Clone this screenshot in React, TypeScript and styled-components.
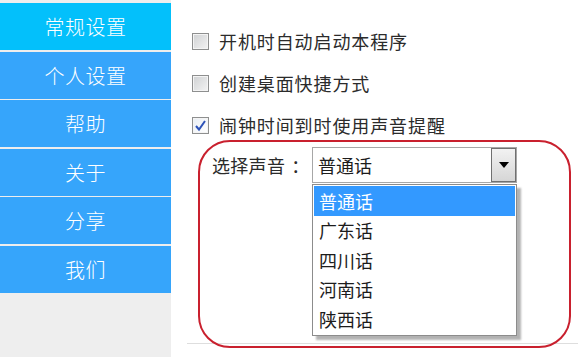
import React from 'react';
import styled, {createGlobalStyle} from 'styled-components';

const GlobalStyle = createGlobalStyle`
	html, body {
		margin: 0;
		padding: 0;
		background: #ffffff;
	}

	body {
		font-family: "Microsoft YaHei", "Noto Sans CJK SC", "Noto Sans", sans-serif;
	}
`;

const Window = styled.div`
	position: relative;
	display: flex;
	width: 578px;
	height: 357px;
	overflow: hidden;
	background: #ffffff;
`;

const Sidebar = styled.nav`
	display: flex;
	flex-direction: column;
	gap: 1.5px;
	width: 171px;
	padding-top: 3px;
	box-sizing: border-box;
	background: #eeeeee;
`;

const NavItem = styled.div<{ $active?: boolean }>`
	display: flex;
	align-items: center;
	justify-content: center;
	height: 47px;
	background: ${p => (p.$active ? '#03c0fb' : '#36a5fb')};
	color: #ffffff;
	font-size: 20px;
	font-weight: 300;
	letter-spacing: 0.5px;
`;

const Main = styled.main`
	position: relative;
	flex: 1;
	padding: 20px 0 0 21px;
`;

const CheckRow = styled.label`
	display: flex;
	align-items: center;
	gap: 10px;
	height: 42px;
	color: #2b2b2b;
	font-size: 18px;
	letter-spacing: 0.9px;
`;

const Box = styled.span<{ $checked?: boolean }>`
	display: flex;
	align-items: center;
	justify-content: center;
	width: 17px;
	height: 17px;
	box-sizing: border-box;
	border: 1px solid #8e8f8f;
	background: ${p => (p.$checked
		? 'linear-gradient(135deg, #e9eef4, #ffffff)'
		: 'linear-gradient(135deg, #cfd1d3, #f3f3f3)')};
	box-shadow: inset 0 0 0 1px #f4f4f4;
`;

const VoiceRow = styled.div`
	display: flex;
	align-items: center;
	height: 36px;
	margin: 1px 0 0 20px;
	color: #2b2b2b;
	font-size: 18px;
`;

const VoiceLabel = styled.span`
	width: 100px;
	letter-spacing: 0.3px;
`;

const Colon = styled.span`
	margin-left: 6px;
`;

const SelectWrap = styled.div`
	position: relative;
`;

const SelectBox = styled.div`
	display: flex;
	align-items: center;
	justify-content: space-between;
	width: 205px;
	height: 36px;
	box-sizing: border-box;
	border: 1px solid #a7a7a7;
	padding-left: 5px;
	background: #ffffff;
	color: #1c1c1c;
`;

const DropButton = styled.span`
	display: flex;
	align-items: center;
	justify-content: center;
	width: 25px;
	height: 34px;
	box-sizing: border-box;
	border: 1px solid #707070;
	background: linear-gradient(#f2f2f2, #d6d6d6);
`;

const OptionList = styled.ul`
	position: absolute;
	top: 37px;
	left: 0;
	width: 205px;
	margin: 0;
	padding: 1px;
	box-sizing: border-box;
	list-style: none;
	border: 1px solid #8c8c8c;
	background: #ffffff;
	box-shadow: 4px 4px 2px rgba(0, 0, 0, 0.3);
`;

const Option = styled.li<{ $selected?: boolean }>`
	display: flex;
	align-items: center;
	height: 29.5px;
	padding-left: 5px;
	background: ${p => (p.$selected ? '#3399ff' : 'transparent')};
	color: ${p => (p.$selected ? '#ffffff' : '#1c1c1c')};
	font-size: 18px;
`;

const Divider = styled.div`
	position: absolute;
	left: 16px;
	right: 0;
	top: 343px;
	height: 1px;
	background: #dedede;
`;

// red annotation drawn on top of the screenshot
const Highlight = styled.div`
	position: absolute;
	left: 198px;
	top: 140px;
	width: 373px;
	height: 208px;
	box-sizing: border-box;
	border: 2px solid #c9202e;
	border-radius: 32px;
	pointer-events: none;
`;

const menu = ['常规设置', '个人设置', '帮助', '关于', '分享', '我们'];
const voices = ['普通话', '广东话', '四川话', '河南话', '陕西话'];

const Check = () => (
	<svg width="13" height="13" viewBox="0 0 13 13">
		<path d="M2 7 L5 10.5 L11 2" fill="none" stroke="#2d52b8" strokeWidth="2"/>
	</svg>
);

const Caret = () => (
	<svg width="10" height="6" viewBox="0 0 10 6">
		<path d="M0 0 H10 L5 6 Z" fill="#000"/>
	</svg>
);

export default function App() {
	return (
		<Window>
			<GlobalStyle/>
			<Sidebar>
				{menu.map((m, i) => (
					<NavItem key={m} $active={i === 0}>{m}</NavItem>
				))}
			</Sidebar>

			<Main>
				<CheckRow><Box/>开机时自动启动本程序</CheckRow>
				<CheckRow><Box/>创建桌面快捷方式</CheckRow>
				<CheckRow><Box $checked><Check/></Box>闹钟时间到时使用声音提醒</CheckRow>

				<VoiceRow>
					<VoiceLabel>选择声音<Colon>：</Colon></VoiceLabel>
					<SelectWrap>
						<SelectBox>
							普通话
							<DropButton><Caret/></DropButton>
						</SelectBox>
						<OptionList>
							{voices.map((v, i) => (
								<Option key={v} $selected={i === 0}>{v}</Option>
							))}
						</OptionList>
					</SelectWrap>
				</VoiceRow>

				<Divider/>
			</Main>

			<Highlight/>
		</Window>
	);
}
